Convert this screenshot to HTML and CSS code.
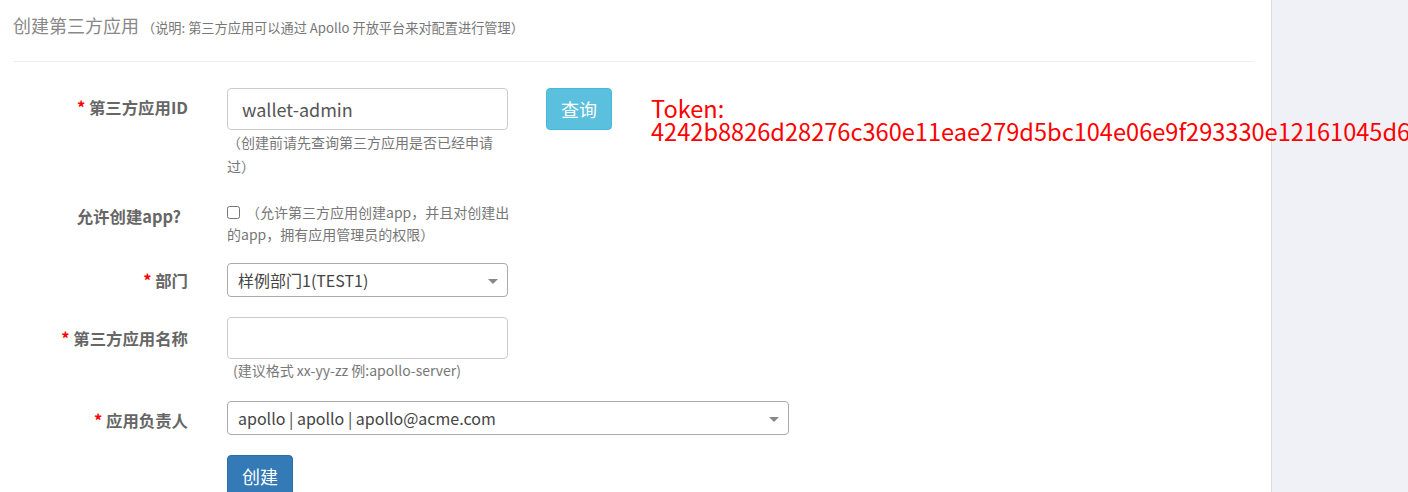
FILE: index.html
```html
<!DOCTYPE html>
<html lang="zh-CN">
<head>
<meta charset="utf-8">
<title>创建第三方应用</title>
<link rel="stylesheet" href="styles.css">
</head>
<body>
<div class="main">
  <div class="title">创建第三方应用<small>（说明: 第三方应用可以通过 Apollo 开放平台来对配置进行管理）</small></div>
  <div class="divider"></div>
  <form class="form">
    <div class="row row-id">
      <label class="label"><span class="req">*</span> 第三方应用ID</label>
      <div class="field field-id">
        <div class="col-input">
          <input class="input" type="text" value="wallet-admin">
          <div class="hint hint-id">（创建前请先查询第三方应用是否已经申请过）</div>
        </div>
        <button type="button" class="btn btn-info">查询</button>
        <div class="token">Token: 4242b8826d28276c360e11eae279d5bc104e06e9f293330e12161045d6</div>
      </div>
    </div>
    <div class="row row-check">
      <label class="label label-check">允许创建app?</label>
      <div class="field check-field">
        <input type="checkbox" class="checkbox"><span class="hint-inline">（允许第三方应用创建app，并且对创建出的app，拥有应用管理员的权限）</span>
      </div>
    </div>
    <div class="row row-dept">
      <label class="label"><span class="req">*</span> 部门</label>
      <div class="field">
        <div class="select select-short">样例部门1(TEST1)</div>
      </div>
    </div>
    <div class="row row-name">
      <label class="label"><span class="req">*</span> 第三方应用名称</label>
      <div class="field">
        <input class="input" type="text">
        <div class="hint hint-name">(建议格式 xx-yy-zz 例:apollo-server)</div>
      </div>
    </div>
    <div class="row row-owner">
      <label class="label"><span class="req">*</span> 应用负责人</label>
      <div class="field">
        <div class="select select-long">apollo | apollo | apollo@acme.com</div>
      </div>
    </div>
    <div class="row row-submit">
      <div class="label"></div>
      <div class="field">
        <button type="button" class="btn btn-primary">创建</button>
      </div>
    </div>
  </form>
</div>
</body>
</html>
```

FILE: styles.css
```css
html, body {
  margin: 0;
  padding: 0;
  height: 100%;
  overflow: hidden;
}
body {
  background: #f0f1f6;
  font-family: "Noto Sans CJK SC", "Noto Sans", sans-serif;
  color: #555;
}
.main {
  width: 1240px;
  min-height: 100%;
  background: #fff;
  border-right: 1px solid #dcdcdc;
  padding: 0 18px 0 13px;
}
.title {
  padding-top: 13px;
  font-size: 18px;
  line-height: 24px;
  color: #888;
}
.title small {
  font-size: 13.2px;
  color: #777;
  margin-left: 3px;
}
.divider {
  margin-top: 21px;
  height: 1px;
  background: #eee;
}
.form {
  padding-top: 26px;
}
.row {
  display: flex;
  align-items: flex-start;
}
.label {
  width: 175px;
  flex: none;
  text-align: right;
  font-size: 16.4px;
  font-weight: bold;
  line-height: 24px;
  color: #666;
}
.req {
  color: #f00;
}
.field {
  margin-left: 39px;
}
.input {
  box-sizing: border-box;
  display: block;
  width: 281px;
  height: 42px;
  margin: 0;
  padding: 0 14px;
  border: 1px solid #ccc;
  border-radius: 4px;
  font-family: inherit;
  font-size: 18px;
  color: #555;
  outline: none;
}
.hint {
  font-size: 14px;
  color: #777;
}
.row-id { margin-bottom: 23px; }
.row-id .label { padding-top: 7px; }
.field-id {
  display: flex;
  align-items: flex-start;
}
.col-input { width: 281px; flex: none; }
.hint-id {
  width: 276px;
  line-height: 24px;
}
.btn {
  box-sizing: border-box;
  flex: none;
  height: 42px;
  width: 66px;
  border-radius: 4px;
  font-family: inherit;
  font-size: 18px;
  color: #fff;
  padding: 0;
  cursor: pointer;
}
.btn-info {
  margin-left: 38px;
  background: #5bc0de;
  border: 1px solid #46b8da;
}
.btn-primary {
  background: #337ab7;
  border: 1px solid #2e6da4;
}
.token {
  margin-left: 39px;
  margin-top: 9px;
  color: #f00;
  font-size: 23.6px;
  line-height: 23px;
}
.row-check { margin-bottom: 18px; }
.row-check .label { padding-top: 3px; padding-right: 7px; width: 168px; }
.check-field {
  width: 284px;
  font-size: 14px;
  line-height: 22px;
  color: #777;
}
.checkbox {
  width: 13px;
  height: 13px;
  margin: 0 6px 0 0;
  vertical-align: -1px;
}
.row-dept { margin-bottom: 20px; }
.row-dept .label { padding-top: 5px; }
.select {
  position: relative;
  box-sizing: border-box;
  height: 34px;
  border: 1px solid #aaa;
  border-radius: 4px;
  padding: 0 30px 0 10px;
  font-size: 16px;
  line-height: 32px;
  color: #444;
}
.select::after {
  content: "";
  position: absolute;
  right: 9px;
  top: 15px;
  border-left: 5px solid transparent;
  border-right: 5px solid transparent;
  border-top: 5px solid #888;
}
.select-short { width: 281px; }
.select-long { width: 562px; }
.row-name { margin-bottom: 20px; }
.row-name .label { padding-top: 9px; }
.hint-name {
  line-height: 22px;
  padding-left: 6px;
}
.row-owner { margin-bottom: 20px; }
.row-owner .label { padding-top: 7px; }
```
